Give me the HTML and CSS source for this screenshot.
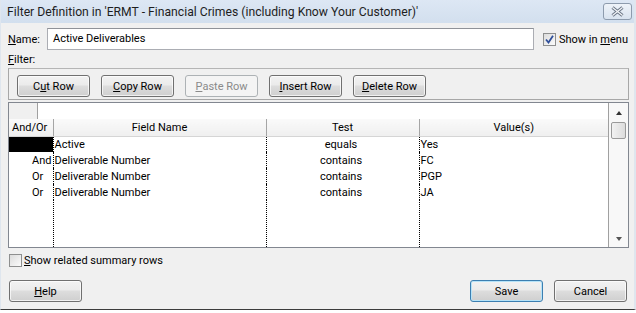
FILE: index.html
```html
<!DOCTYPE html>
<html lang="en">
<head>
    <meta charset="UTF-8">
    <title>Filter Definition</title>
    <link rel="stylesheet" href="styles.css">
</head>
<body>
    <div class="window">
        <div class="titlebar">
            <span class="title">Filter Definition in 'ERMT - Financial Crimes (including Know Your Customer)'</span>
            <div class="close-btn">
                <svg width="13" height="11" viewBox="0 0 13 11">
                    <path d="M1.5 1.5 L11.5 9.5 M11.5 1.5 L1.5 9.5" stroke="#6b7686" stroke-width="3.2" fill="none"/>
                    <path d="M1.5 1.5 L11.5 9.5 M11.5 1.5 L1.5 9.5" stroke="#f4f6f9" stroke-width="1.2" fill="none"/>
                </svg>
            </div>
        </div>

        <div class="dialog">
            <div class="name-row">
                <span class="name-label"><u>N</u>ame:</span>
                <div class="name-input">Active Deliverables</div>
                <span class="check">
                    <span class="box">
                        <svg width="9" height="9" viewBox="0 0 9 9"><path d="M1 4.5 L3.5 7.5 L8 0.8" stroke="#2f4f9a" stroke-width="1.8" fill="none"/></svg>
                    </span>
                    <span>Show in <u>m</u>enu</span>
                </span>
            </div>

            <div class="filter-label"><u>F</u>ilter:</div>

            <div class="toolbar">
                <div class="btn">C<u>u</u>t Row</div>
                <div class="btn"><u>C</u>opy Row</div>
                <div class="btn disabled"><u>P</u>aste Row</div>
                <div class="btn"><u>I</u>nsert Row</div>
                <div class="btn"><u>D</u>elete Row</div>
            </div>

            <div class="grid">
                <div class="grid-main">
                    <div class="edit-row">
                        <div class="edit-sel"></div>
                        <div class="edit-box"></div>
                    </div>
                    <table class="filter-table">
                        <colgroup>
                            <col class="c-andor">
                            <col class="c-field">
                            <col class="c-test">
                            <col class="c-value">
                        </colgroup>
                        <thead>
                            <tr>
                                <th class="andor">And/Or</th>
                                <th>Field Name</th>
                                <th>Test</th>
                                <th>Value(s)</th>
                            </tr>
                        </thead>
                        <tbody>
                            <tr>
                                <td class="andor selected"></td>
                                <td>Active</td>
                                <td class="test">equals</td>
                                <td>Yes</td>
                            </tr>
                            <tr>
                                <td class="andor">And</td>
                                <td>Deliverable Number</td>
                                <td class="test">contains</td>
                                <td>FC</td>
                            </tr>
                            <tr>
                                <td class="andor">Or</td>
                                <td>Deliverable Number</td>
                                <td class="test">contains</td>
                                <td>PGP</td>
                            </tr>
                            <tr>
                                <td class="andor">Or</td>
                                <td>Deliverable Number</td>
                                <td class="test">contains</td>
                                <td>JA</td>
                            </tr>
                            <tr class="filler">
                                <td></td><td></td><td></td><td></td>
                            </tr>
                        </tbody>
                    </table>
                </div>
                <div class="scrollbar">
                    <span class="arrow up"></span>
                    <span class="thumb"></span>
                    <span class="track"></span>
                    <span class="arrow down"></span>
                </div>
            </div>

            <div class="summary">
                <span class="box empty"></span>
                <span><u>S</u>how related summary rows</span>
            </div>

            <div class="footer">
                <div class="btn"><u>H</u>elp</div>
                <div class="spacer"></div>
                <div class="btn default">Save</div>
                <div class="btn">Cancel</div>
            </div>
        </div>
    </div>
</body>
</html>
```

FILE: styles.css
```css
* {
    box-sizing: border-box;
}
body {
    margin: 0;
    background-color: #fff;
    font-family: Roboto, "Noto Sans", sans-serif;
    font-size: 11px;
    color: #000;
}
.window {
    width: 636px;
    height: 310px;
    background-color: #f0f0f0;
    border-bottom: 1px solid #3c3c3c;
    border-left: 1px solid #dfe6ee;
    border-right: 2px solid #dfe6ee;
}

/* title bar */
.titlebar {
    height: 23px;
    display: flex;
    align-items: center;
    justify-content: space-between;
    padding: 0 2px 0 6px;
    background: linear-gradient(#dde7f4, #d2dfee);
}
.title {
    font-size: 12.2px;
    color: #1e1e1e;
    white-space: nowrap;
}
.close-btn {
    width: 29px;
    height: 17px;
    margin-top: -1px;
    border: 1px solid #8d9bad;
    border-radius: 3px;
    background: linear-gradient(#eef3f9, #d9e3ef);
    display: flex;
    align-items: center;
    justify-content: center;
}

/* dialog body */
.dialog {
    padding: 5px 5px 0 7px;
}
.name-row {
    display: flex;
    align-items: center;
    height: 22px;
}
.name-label {
    width: 39px;
    flex-shrink: 0;
}
.name-input {
    width: 487px;
    flex-shrink: 0;
    height: 22px;
    background-color: #fff;
    border: 1px solid #abadb3;
    border-top-color: #8f9298;
    padding: 0 5px;
    line-height: 20px;
}
.check {
    display: flex;
    align-items: center;
    margin-left: 9px;
    white-space: nowrap;
}
.box {
    width: 13px;
    height: 13px;
    border: 1px solid #8e8f8f;
    background: linear-gradient(135deg, #dcdcdc, #fbfbfb);
    display: inline-flex;
    align-items: center;
    justify-content: center;
    margin-right: 3px;
}
.filter-label {
    margin-top: 2px;
    line-height: 15px;
}

/* buttons */
.btn {
    width: 73px;
    height: 22px;
    border: 1px solid #707070;
    border-radius: 3px;
    background: linear-gradient(#f2f2f2 0%, #ebebeb 45%, #dddddd 50%, #cfcfcf 100%);
    display: flex;
    align-items: center;
    justify-content: center;
    white-space: nowrap;
    box-shadow: inset 0 0 0 1px rgba(255, 255, 255, 0.7);
}
.btn.disabled {
    border-color: #adb2b5;
    background: #f4f4f4;
    color: #8a8a8a;
    box-shadow: none;
}
.btn.default {
    border-color: #3c7fb1;
    box-shadow: inset 0 0 0 1px #b6e3f8;
}

.toolbar {
    display: flex;
    gap: 11px;
    width: 621px;
    height: 32px;
    margin-top: 1px;
    padding: 6px 8px 0;
    border: 1px solid #a7a7a7;
    border-top-color: #b5b5b5;
}

/* filter grid */
.grid {
    display: flex;
    width: 621px;
    height: 146px;
    margin-top: 2px;
    border: 1px solid #828790;
    background-color: #fff;
}
.grid-main {
    width: 600px;
    display: flex;
    flex-direction: column;
    border-right: 1px solid #a0a0a0;
}
.edit-row {
    display: flex;
    height: 16px;
}
.edit-sel {
    width: 29px;
    background-color: #f0f0f0;
    border-right: 1px solid #a0a0a0;
}
.edit-box {
    flex: 1;
}
.filter-table {
    flex: 1;
    width: 599px;
    border-collapse: collapse;
    table-layout: fixed;
}
.c-andor { width: 44px; }
.c-field { width: 213px; }
.c-test { width: 153px; }
.c-value { width: 189px; }
.filter-table th {
    height: 17px;
    padding: 0;
    font-weight: normal;
    text-align: center;
    background: linear-gradient(#fafafa, #efefef);
    border-right: 1px solid #a5a5a5;
    border-bottom: 1px solid #d5d5d5;
}
.filter-table th:last-child {
    border-right: none;
}
.filter-table th.andor {
    text-align: left;
    padding-left: 3px;
}
.filter-table td {
    height: 16px;
    padding: 0 0 0 1px;
    line-height: 15px;
    white-space: nowrap;
    border-right: 1px dotted #000;
}
.filter-table td:last-child {
    border-right: none;
}
.filter-table td.andor {
    padding-left: 23px;
}
.filter-table td.selected {
    background-color: #000;
}
.filter-table td.test {
    text-align: center;
    padding-right: 4px;
}
.filter-table tr.filler td {
    height: auto;
}

/* scrollbar */
.scrollbar {
    flex: 1;
    display: flex;
    flex-direction: column;
    align-items: center;
    background-color: #f8f8f8;
    padding: 8px 0 6px;
}
.arrow {
    width: 0;
    height: 0;
    flex-shrink: 0;
    border-left: 3px solid transparent;
    border-right: 3px solid transparent;
}
.arrow.up {
    border-bottom: 4px solid #333;
}
.arrow.down {
    border-top: 4px solid #555;
}
.thumb {
    width: 15px;
    height: 17px;
    flex-shrink: 0;
    margin-top: 7px;
    border: 1px solid #9a9a9a;
    border-radius: 2px;
    background: linear-gradient(90deg, #f2f2f2, #dcdcdc);
}
.track {
    flex: 1;
}

/* bottom */
.summary {
    display: flex;
    align-items: center;
    height: 16px;
    margin-top: 4px;
    margin-left: 1px;
}
.box.empty {
    margin-right: 2px;
}
.footer {
    display: flex;
    gap: 11px;
    width: 621px;
    margin-top: 12px;
    padding: 0 2px 0 1px;
}
.spacer {
    flex: 1;
}
```
